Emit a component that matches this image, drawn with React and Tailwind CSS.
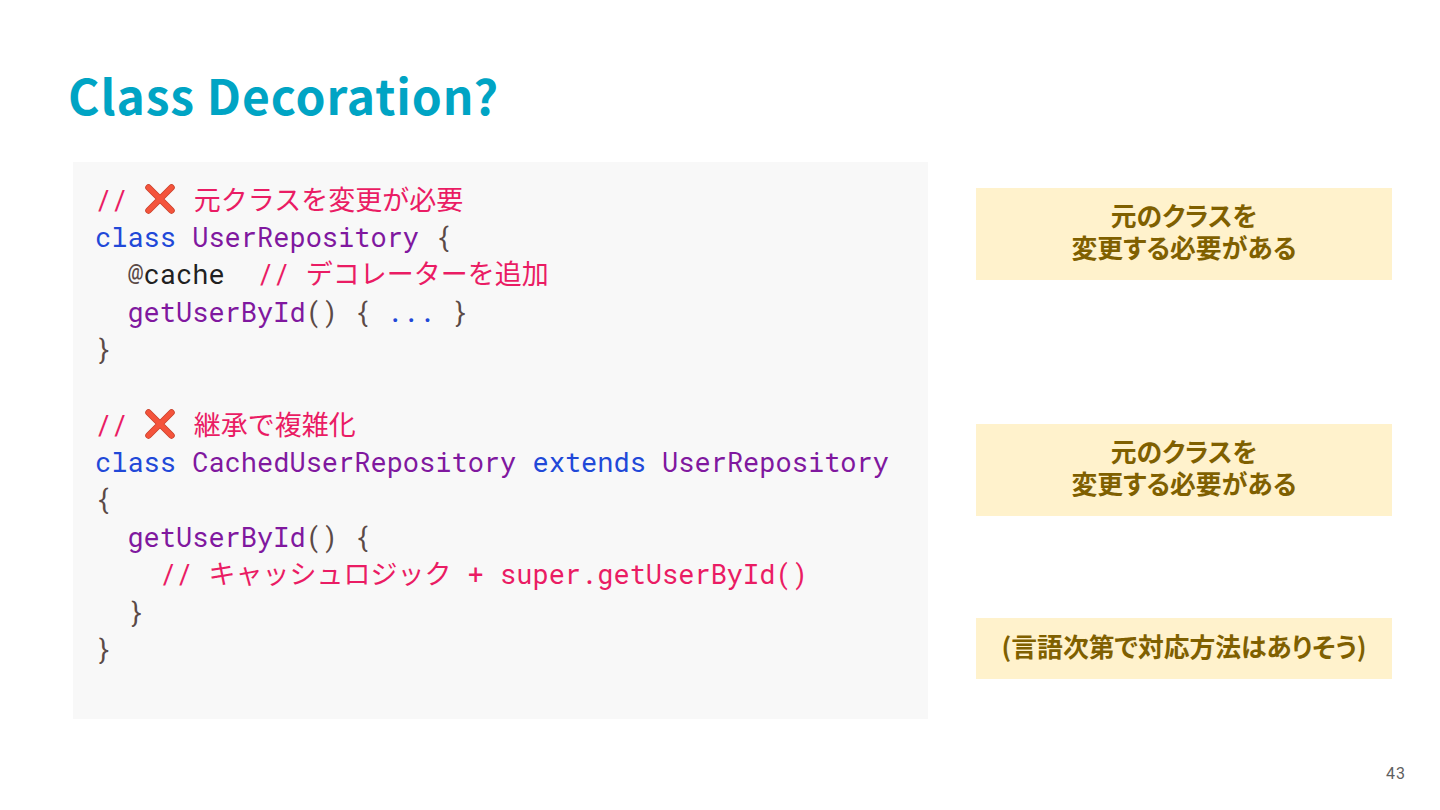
import React from 'react';

const MONO = 'font-["Roboto_Mono","DejaVu_Sans_Mono","Noto_Sans_CJK_JP",monospace]';

const tone = {
    c: 'text-[#ea1c64]',
    k: 'text-[#2148d8]',
    n: 'text-[#80189f]',
    p: 'text-[#5b4a47]',
    t: 'text-[#212121]',
};

const CrossMark = () => (
    <svg viewBox="0 0 32 32" className="inline-block w-[32px] h-[32px] mr-[2px] align-[-5px]">
        <path d="M4.5 4.5 L27.5 27.5 M27.5 4.5 L4.5 27.5" stroke="#c8412b" strokeWidth="6.5" strokeLinecap="round" />
        <path d="M4.5 4.5 L27.5 27.5 M27.5 4.5 L4.5 27.5" stroke="#f4543c" strokeWidth="5" strokeLinecap="round" />
    </svg>
);

// each line is a list of [tone, text]; 'x' stands for the cross mark
const lines = [
    [['c', '// '], ['x'], ['c', ' 元クラスを変更が必要']],
    [['k', 'class '], ['n', 'UserRepository'], ['p', ' {']],
    [['p', '  @'], ['t', 'cache  '], ['c', '// デコレーターを追加']],
    [['n', '  getUserById'], ['p', '() { '], ['k', '...'], ['p', ' }']],
    [['p', '}']],
    [],
    [['c', '// '], ['x'], ['c', ' 継承で複雑化']],
    [['k', 'class '], ['n', 'CachedUserRepository'], ['k', ' extends '], ['n', 'UserRepository']],
    [['p', '{']],
    [['n', '  getUserById'], ['p', '() {']],
    [['c', '    // キャッシュロジック + super.getUserById()']],
    [['p', '  }']],
    [['p', '}']],
];

const Note = ({ className, children }) => (
    <div className={`flex items-center justify-center bg-[#fff2cc] text-center text-[#7f6000] font-bold text-[25.8px] leading-[32px] font-["Noto_Sans_CJK_JP",sans-serif] [font-feature-settings:"palt"] ${className}`}>
        <p className="-mt-[6px]">{children}</p>
    </div>
);

const App = () => {
    return (
        <div className="w-[1440px] h-[810px] bg-white overflow-hidden flex flex-col">
            <h1 className='pl-[68px] pt-[62px] h-[162px] text-[#00a4c4] font-bold text-[48px] leading-[64px] tracking-[0.9px] font-["Noto_Sans_CJK_JP",sans-serif]'>
                Class Decoration?
            </h1>
            <div className="flex pl-[73px] gap-[48px]">
                <pre className={`w-[855px] h-[557px] bg-[#f8f8f8] pl-[22px] pt-[18px] text-[27px] leading-[37.5px] ${MONO}`}>
                    {lines.map((line, i) => (
                        <div key={i} className={`h-[37.5px] whitespace-pre ${line.some(([kind]) => kind === 'x') ? 'pt-px' : ''}`}>
                            {line.map(([kind, text], j) =>
                                kind === 'x' ? <CrossMark key={j} /> : <span key={j} className={tone[kind]}>{text}</span>
                            )}
                        </div>
                    ))}
                </pre>
                <div className="w-[416px] pt-[26px] flex flex-col">
                    <Note className="h-[92px]">元のクラスを<br />変更する必要がある</Note>
                    <Note className="h-[92px] mt-[144px]">元のクラスを<br />変更する必要がある</Note>
                    <Note className="h-[61px] mt-[102px]">(言語次第で対応方法はありそう)</Note>
                </div>
            </div>
            <div className='mt-[45px] pr-[34px] text-right text-[16px] leading-[20px] tracking-[1px] text-[#5f5f5f] font-["Roboto",sans-serif]'>43</div>
        </div>
    );
};

export default App;
